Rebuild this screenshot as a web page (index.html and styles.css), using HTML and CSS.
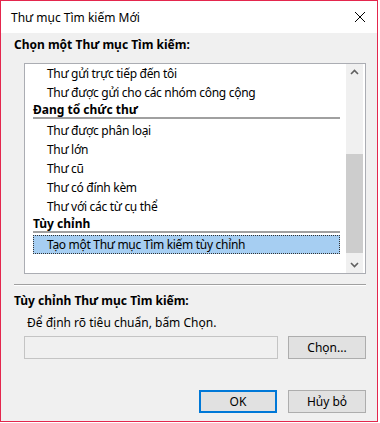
FILE: index.html
```html
<!DOCTYPE html>
<html lang="vi">
<head>
<meta charset="UTF-8">
<title>Thư mục Tìm kiếm Mới</title>
<link rel="stylesheet" href="styles.css">
</head>
<body>
<div class="window">
  <div class="titlebar">
    <span class="title">Thư mục Tìm kiếm Mới</span>
    <svg class="close" width="12" height="12" viewBox="0 0 12 12">
      <path d="M1 1 L11 11 M11 1 L1 11" stroke="#000" stroke-width="1" fill="none"/>
    </svg>
  </div>

  <div class="content">
    <div class="section-label">Chọn một Thư mục Tìm kiếm:</div>

    <!-- danh sách thư mục tìm kiếm -->
    <div class="listbox">
      <div class="list">
        <div class="item">Thư gửi trực tiếp đến tôi</div>
        <div class="item">Thư được gửi cho các nhóm công cộng</div>
        <div class="group">Đang tổ chức thư</div>
        <div class="item">Thư được phân loại</div>
        <div class="item">Thư lớn</div>
        <div class="item">Thư cũ</div>
        <div class="item">Thư có đính kèm</div>
        <div class="item">Thư với các từ cụ thể</div>
        <div class="group">Tùy chỉnh</div>
        <div class="item selected">Tạo một Thư mục Tìm kiếm tùy chỉnh</div>
      </div>
      <div class="scrollbar">
        <svg class="arrow" width="17" height="17" viewBox="0 0 17 17">
          <path d="M5 10 L8.5 6.5 L12 10" stroke="#606060" stroke-width="1.6" fill="none"/>
        </svg>
        <div class="track"><div class="thumb"></div></div>
        <svg class="arrow" width="17" height="17" viewBox="0 0 17 17">
          <path d="M5 7 L8.5 10.5 L12 7" stroke="#606060" stroke-width="1.6" fill="none"/>
        </svg>
      </div>
    </div>

    <div class="separator"></div>

    <div class="section-label">Tùy chỉnh Thư mục Tìm kiếm:</div>
    <div class="hint">Để định rõ tiêu chuẩn, bấm Chọn.</div>
    <div class="criteria-row">
      <div class="criteria-box"></div>
      <button class="btn">Chọn...</button>
    </div>

    <div class="footer">
      <button class="btn default">OK</button>
      <button class="btn">Hủy bỏ</button>
    </div>
  </div>
</div>
</body>
</html>
```

FILE: styles.css
```css
/* nền trang và font chung */
body {
  margin: 0;
  background: #fff;
  font-family: "Noto Sans", "DejaVu Sans", sans-serif;
  font-size: 12px;
  color: #000;
}
/* khung cửa sổ có viền đỏ */
.window {
  width: 378px;
  height: 422px;
  box-sizing: border-box;
  border: 1px solid #e4264d;
  background: #f0f0f0;
  display: flex;
  flex-direction: column;
}
.titlebar {
  height: 32px;
  background: #fff;
  display: flex;
  align-items: center;
  justify-content: space-between;
  padding: 0 11px 0 10px;
}
.title {
  font-size: 12px;
}
.content {
  padding: 0 11px 0 13px;
  display: flex;
  flex-direction: column;
}
.section-label {
  font-weight: bold;
  line-height: 16px;
  margin-top: 4px;
}
/* hộp danh sách */
.listbox {
  margin: 10px 0 0 10px;
  height: 211px;
  box-sizing: border-box;
  border: 1px solid #abadb3;
  background: #fff;
  display: flex;
  overflow: hidden;
}
.list {
  flex: 1;
  padding: 0 6px 0 8px;
}
.item {
  height: 19px;
  line-height: 19px;
  padding-left: 14px;
  white-space: nowrap;
  letter-spacing: -0.3px;
}
.group {
  font-weight: bold;
  height: 15px;
  line-height: 16px;
  border-bottom: 2px solid #a0a0a0;
  margin-bottom: 2px;
}
.item.selected {
  background: #a6cef2;
  outline: 1px dotted #333;
  outline-offset: -1px;
}
/* thanh cuộn */
.scrollbar {
  width: 17px;
  margin-right: 2px;
  background: #f0f0f0;
  display: flex;
  flex-direction: column;
}
.track {
  flex: 1;
  padding-top: 73px;
  padding-bottom: 2px;
}
.thumb {
  height: 99px;
  background: #cdcdcd;
}
.separator {
  margin-top: 10px;
  border-top: 1px solid #a0a0a0;
  border-bottom: 1px solid #fff;
}
.separator + .section-label {
  margin-top: 7px;
}
.hint {
  margin: 6px 0 0 13px;
  line-height: 16px;
}
.criteria-row {
  display: flex;
  justify-content: space-between;
  margin: 5px 0 0 10px;
}
.criteria-box {
  width: 254px;
  height: 23px;
  box-sizing: border-box;
  border: 1px solid #c4c4c4;
  background: #f0f0f0;
}
/* nút kiểu Windows */
.btn {
  width: 78px;
  height: 23px;
  box-sizing: border-box;
  border: 1px solid #adadad;
  background: #e1e1e1;
  font-family: inherit;
  font-size: 12px;
  color: #000;
  padding: 0;
}
.btn.default {
  border: 2px solid #0078d7;
}
.footer {
  display: flex;
  justify-content: flex-end;
  gap: 11px;
  margin-top: 31px;
}
```
